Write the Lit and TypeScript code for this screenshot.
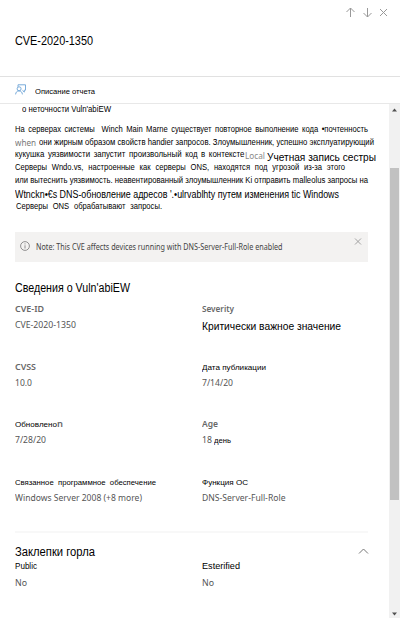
import { LitElement, html, css, svg } from "lit";
import { customElement, property } from "lit/decorators.js";

/** One run of text, stretched or squeezed to an exact measure. */
@customElement("fit-text")
class FitText extends LitElement {
  @property() text = "";
  @property({ type: Number }) w = 0;
  static styles = css`
    :host { display: block; flex: none; white-space: pre; }
    span { display: inline-block; transform-origin: 0 50%; vertical-align: top; }
  `;
  updated() {
    const span = this.renderRoot.querySelector("span") as HTMLElement;
    span.style.transform = "none";
    const natural = span.getBoundingClientRect().width;
    this.style.width = this.w + "px";
    if (natural > 0) span.style.transform = `scaleX(${this.w / natural})`;
  }
  render() {
    return html`<span>${this.text}</span>`;
  }
}

type Run = [text: string, width: number, cls: string];
const t = ([text, w, cls]: Run) => html`<fit-text class=${cls} .text=${text} .w=${w}></fit-text>`;

const paragraph: { cls: string; runs: Run[] }[] = [
  { cls: "h13", runs: [["На серверах системы  Winch Main Marne существует повторное выполнение кода •почтенность", 353, "ru"]] },
  { cls: "h12", runs: [["when", 21, "grey when"], ["они жирным образом свойств handier запросов. Злоумышленник, успешно эксплуатирующий", 335, "ru tight"]] },
  { cls: "h13", runs: [["кукушка уязвимости запустит произвольный код в контексте", 229.5, "ru"], ["Local", 20, "grey local"], ["Учетная запись сестры", 109, "big account"]] },
  { cls: "h13", runs: [["Серверы Wndo.vs, настроенные как серверы ONS, находятся под угрозой из-за этого", 330, "ru wide"]] },
  { cls: "h14", runs: [["или вытеснить уязвимость. неавентированный злоумышленник Ki отправить malleolus запросы на", 353, "ru tight"]] },
  { cls: "h12", runs: [["Wtnckn•€s DNS-обновление адресов '.•ulrvablhty путем изменения tic Windows", 324, "big dns"]] },
  { cls: "h12 inset", runs: [["Серверы ONS обрабатывают запросы.", 146, "ru wide"]] },
];

const details: { label: Run[]; value: Run[] }[] = [
  { label: [["CVE-ID", 29, "label"]], value: [["CVE-2020-1350", 61, "val"]] },
  { label: [["Severity", 32, "label"]], value: [["Критически важное значение", 139, "big critical"]] },
  { label: [["CVSS", 21, "label"]], value: [["10.0", 17, "val"]] },
  { label: [["Дата публикации", 64, "ru-label"]], value: [["7/14/20", 31, "val"]] },
  { label: [["Обновлено", 42, "ru-label"], ["n", 6, "label"]], value: [["7/28/20", 31, "val"]] },
  { label: [["Age", 16, "label"]], value: [["18", 10, "val"], ["день", 17, "ru-label day"]] },
  { label: [["Связанное  программное  обеспечение", 141, "ru-label"]], value: [["Windows Server 2008 (+8 more)", 127, "val"]] },
  { label: [["Функция ОС", 46, "ru-label"]], value: [["DNS-Server-Full-Role", 83.5, "val"]] },
];

@customElement("app-root")
class AppRoot extends LitElement {
  static styles = css`
    :host {
      display: flex; flex-direction: column; height: 618px; width: 400px; overflow: hidden;
      background: #fff; color: #000; font-family: "Liberation Sans", Arial, sans-serif;
    }
    * { box-sizing: border-box; }
    svg { display: block; fill: none; flex: none; }
    header { height: 77px; flex: none; border-bottom: 1px solid #e1e1e1; }
    .tools { display: flex; justify-content: flex-end; gap: 5px; padding: 6px 11px 0 0; height: 32px; }
    .title { font-size: 13px; line-height: 18px; padding-left: 15px; }
    .command { height: 27px; flex: none; border-bottom: 1px solid #e8e8e8; display: flex; padding: 7px 0 0 15px; gap: 9px; }
    .command .ru-label { line-height: 16px; }
    .body { flex: 1; display: flex; min-height: 0; }
    .content { width: 389px; padding-left: 15px; overflow: hidden; }
    .subtitle { font-size: 8.5px; line-height: 10px; padding-left: 7px; height: 19px; }
    .line { display: flex; line-height: 12px; }
    .h12 { height: 12px; } .h13 { height: 13px; } .h14 { height: 14px; }
    .inset { padding-left: 1px; }
    .ru { font-size: 8.5px; word-spacing: 1.5px; }
    .tight { word-spacing: 0; }
    .wide { word-spacing: 3px; }
    .big { font-size: 10px; }
    .dns { line-height: 14px; }
    .grey { font-family: "Noto Sans", sans-serif; color: #777; font-size: 9.5px; }
    .when { margin-right: 3px; line-height: 13px; }
    .local { line-height: 15px; color: #8a8a8a; }
    .account { line-height: 20px; margin-left: 2.5px; }
    .note {
      margin-top: 20px; width: 353px; height: 30px; background: #f3f2f1; display: flex;
      padding: 9px 6px 0 5px; font: 8px/11px "Noto Sans", sans-serif; color: #444;
    }
    .note fit-text { margin: 0 auto 0 6px; line-height: 12px; }
    .note .dismiss { margin-top: -4px; }
    .heading { font-size: 12px; line-height: 18px; }
    .about { margin-top: 17px; height: 22px; }
    .grid { display: grid; grid-template-columns: 187px 166px; grid-auto-rows: 57.6px; }
    .runs { display: flex; height: 16px; line-height: 16px; }
    .label { font: 600 8.8px/16px "Noto Sans", sans-serif; color: #686868; }
    .val { font: 8.8px/16px "Noto Sans", sans-serif; color: #555; }
    .ru-label { font-size: 8px; line-height: 17px; }
    .day { margin-left: 2px; }
    .critical { line-height: 20px; }
    .divider { width: 353px; height: 2px; background: #f8f8f8; }
    .threat { display: flex; justify-content: space-between; width: 354px; margin-top: 10px; height: 16px; }
    .threat svg { margin-top: 4px; }
    .flag { font-size: 9px; line-height: 15px; }
    .scroll { width: 11px; background: #f1f1f1; display: flex; flex-direction: column; align-items: center; }
    .scroll .up { margin-top: 4px; }
    .thumb { width: 9px; height: 332px; margin-top: 56px; background: #c1c1c1; }
    .scroll .down { margin: auto 0 2px; }
  `;
  render() {
    const cell = (label: Run[], value: Run[]) => html`
      <div><div class="runs">${label.map(t)}</div><div class="runs">${value.map(t)}</div></div>`;
    return html`
      <header>
        <div class="tools">
          <svg width="12" height="12" viewBox="0 0 12 12" stroke="#999">${svg`<path d="M6.5 11V2M2.5 6l4-4 4 4"/>`}</svg>
          <svg width="12" height="12" viewBox="0 0 12 12" stroke="#999">${svg`<path d="M6.5 2v9M2.5 7l4 4 4-4"/>`}</svg>
          <svg width="11" height="12" viewBox="0 0 11 12" stroke="#999">${svg`<path d="M2 3l7 7M9 3l-7 7"/>`}</svg>
        </div>
        <div class="title">${t(["CVE-2020-1350", 78, ""])}</div>
      </header>
      <div class="command">
        <svg width="11" height="11" viewBox="0 0 11 11" stroke="#6ba3d6" stroke-width=".9">
          <path d="M3 2.8V.8h7.5v5.4H9.3v1.9L7.5 6.4M.6 10.4c.2-2.2 1.4-3.5 3.4-3.5s3.2 1.3 3.4 3.5"/>
          <circle cx="4.1" cy="4.8" r="2"/>
        </svg>
        ${t(["Описание отчета", 60, "ru-label"])}
      </div>
      <div class="body">
        <div class="content">
          <div class="subtitle">${t(["о неточности Vuln'abiEW", 89, ""])}</div>
          ${paragraph.map((l) => html`<div class="line ${l.cls}">${l.runs.map(t)}</div>`)}
          <div class="note">
            <svg width="10" height="10" viewBox="0 0 10 10" stroke="#777" stroke-width=".8">
              <circle cx="5" cy="5" r="4.4"/><path d="M5 4.3v3.2M5 2.4v1"/>
            </svg>
            ${t(["Note: This CVE affects devices running with DNS-Server-Full-Role enabled", 246.5, ""])}
            <svg class="dismiss" width="8" height="9" viewBox="0 0 8 9" stroke="#999" stroke-width=".9">
              <path d="M1 1.5l6 6M7 1.5l-6 6"/>
            </svg>
          </div>
          <div class="heading about">${t(["Сведения о Vuln'abiEW", 115, ""])}</div>
          <div class="grid">${details.map((d) => cell(d.label, d.value))}</div>
          <div class="divider"></div>
          <div class="threat">
            <div class="heading">${t(["Заклепки горла", 80, ""])}</div>
            <svg width="11" height="8" viewBox="0 0 11 8" stroke="#777"><path d="M1 6.5l4.5-4.5L10 6.5"/></svg>
          </div>
          <div class="grid">
            ${cell([["Public", 22, "flag"]], [["No", 12, "val"]])}
            ${cell([["Esterified", 38, "flag"]], [["No", 12, "val"]])}
          </div>
        </div>
        <div class="scroll">
          <svg class="up" width="5" height="4" viewBox="0 0 5 4"><path d="M0 3.5L2.5.5 5 3.5z" fill="#505050"/></svg>
          <div class="thumb"></div>
          <svg class="down" width="5" height="4" viewBox="0 0 5 4"><path d="M0 .5L2.5 3.5 5 .5z" fill="#505050"/></svg>
        </div>
      </div>`;
  }
}
